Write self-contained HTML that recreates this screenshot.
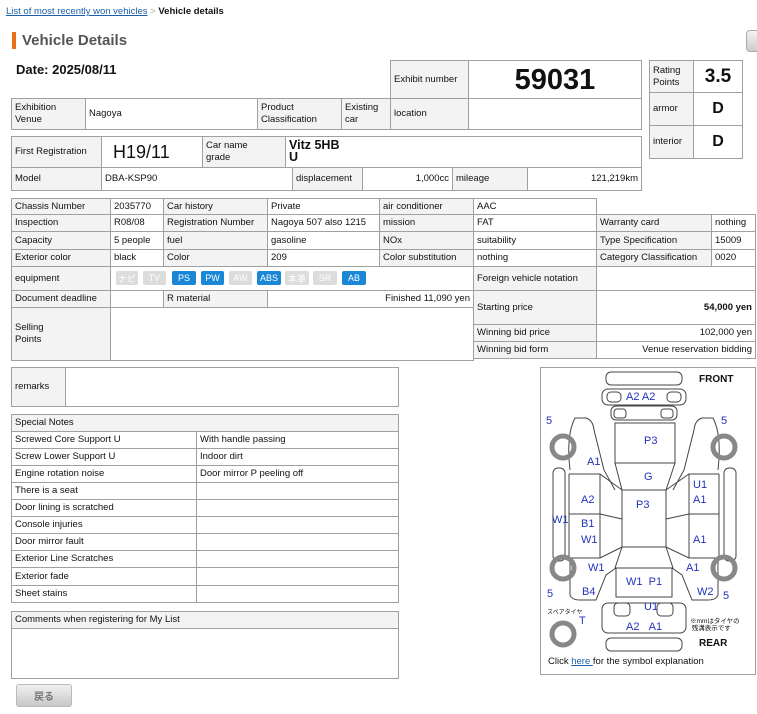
<!DOCTYPE html>
<html><head><meta charset="utf-8"><style>
*{margin:0;padding:0;box-sizing:border-box}
body{width:757px;height:714px;background:#fff;font-family:"Liberation Sans","Noto Sans CJK JP",sans-serif;font-size:9.5px;color:#111;position:relative;overflow:hidden}
.c{position:absolute;border:1px solid #a0a0a0;display:flex;align-items:center;padding:0 3px;line-height:12px;background:#fff}
.l{background:#f3f3f3}
.r{justify-content:flex-end}
.ctr{justify-content:center}
.t{position:absolute;white-space:nowrap}
.b{position:absolute;top:271px;height:14px;border-radius:2px;color:#fff;font-size:9px;display:flex;align-items:center;justify-content:center}
.g{background:#dcdcdc}.bl{background:#1a86d6}
.d{position:absolute;color:#2233bb;font-size:11px;white-space:nowrap}
</style></head><body>
<div class="t" style="left:6px;top:6px;font-size:9.5px"><span style="color:#1a5fa8;text-decoration:underline">List of most recently won vehicles</span> <span style="color:#aaa">&gt;</span> <b>Vehicle details</b></div>
<div style="position:absolute;left:12px;top:32px;width:4px;height:17px;background:#e8701a"></div>
<div class="t" style="left:22px;top:32px;font-size:15px;font-weight:bold;color:#555">Vehicle Details</div>
<div class="t" style="left:16px;top:62px;font-size:13px;font-weight:bold">Date: 2025/08/11</div>
<div style="position:absolute;left:746px;top:30px;width:20px;height:22px;border:1px solid #aaa;border-radius:4px;background:linear-gradient(#f4f4f4,#ccc)"></div>

<!-- exhibit -->
<div class="c l" style="left:390px;top:60px;width:79px;height:39px">Exhibit number</div>
<div class="c ctr" style="left:468px;top:60px;width:174px;height:39px;font-size:29px;font-weight:bold">59031</div>
<div class="c l" style="left:390px;top:98px;width:79px;height:32px">location</div>
<div class="c" style="left:468px;top:98px;width:174px;height:32px"></div>
<div class="c l" style="left:11px;top:98px;width:75px;height:32px">Exhibition<br>Venue</div>
<div class="c" style="left:85px;top:98px;width:173px;height:32px">Nagoya</div>
<div class="c l" style="left:257px;top:98px;width:85px;height:32px">Product<br>Classification</div>
<div class="c l" style="left:341px;top:98px;width:50px;height:32px">Existing<br>car</div>

<!-- rating -->
<div class="c l" style="left:649px;top:60px;width:45px;height:33px">Rating<br>Points</div>
<div class="c ctr" style="left:693px;top:60px;width:50px;height:33px;font-size:19px;font-weight:bold">3.5</div>
<div class="c l" style="left:649px;top:92px;width:45px;height:34px">armor</div>
<div class="c ctr" style="left:693px;top:92px;width:50px;height:34px;font-size:16px;font-weight:bold">D</div>
<div class="c l" style="left:649px;top:125px;width:45px;height:34px">interior</div>
<div class="c ctr" style="left:693px;top:125px;width:50px;height:34px;font-size:16px;font-weight:bold">D</div>

<!-- table B -->
<div class="c l" style="left:11px;top:136px;width:91px;height:32px">First Registration</div>
<div class="c" style="left:101px;top:136px;width:102px;height:32px;font-size:18px;padding-left:11px">H19/11</div>
<div class="c l" style="left:202px;top:136px;width:84px;height:32px">Car name<br>grade</div>
<div class="c" style="left:285px;top:136px;width:357px;height:32px;font-size:12.5px;font-weight:bold;line-height:12px;align-items:flex-start;padding-top:2px">Vitz 5HB<br>U</div>
<div class="c l" style="left:11px;top:167px;width:91px;height:24px">Model</div>
<div class="c" style="left:101px;top:167px;width:192px;height:24px">DBA-KSP90</div>
<div class="c l" style="left:292px;top:167px;width:71px;height:24px">displacement</div>
<div class="c r" style="left:362px;top:167px;width:91px;height:24px">1,000cc</div>
<div class="c l" style="left:452px;top:167px;width:76px;height:24px">mileage</div>
<div class="c r" style="left:527px;top:167px;width:115px;height:24px">121,219km</div>

<!-- table C -->
<div class="c l" style="left:11px;top:198px;width:100px;height:17px">Chassis Number</div>
<div class="c" style="left:110px;top:198px;width:54px;height:17px">2035770</div>
<div class="c l" style="left:163px;top:198px;width:105px;height:17px">Car history</div>
<div class="c" style="left:267px;top:198px;width:113px;height:17px">Private</div>
<div class="c l" style="left:379px;top:198px;width:95px;height:17px">air conditioner</div>
<div class="c" style="left:473px;top:198px;width:124px;height:17px">AAC</div>

<div class="c l" style="left:11px;top:214px;width:100px;height:18px">Inspection</div>
<div class="c" style="left:110px;top:214px;width:54px;height:18px">R08/08</div>
<div class="c l" style="left:163px;top:214px;width:105px;height:18px">Registration Number</div>
<div class="c" style="left:267px;top:214px;width:113px;height:18px">Nagoya 507 also 1215</div>
<div class="c l" style="left:379px;top:214px;width:95px;height:18px">mission</div>
<div class="c" style="left:473px;top:214px;width:124px;height:18px">FAT</div>
<div class="c l" style="left:596px;top:214px;width:116px;height:18px">Warranty card</div>
<div class="c" style="left:711px;top:214px;width:45px;height:18px">nothing</div>

<div class="c l" style="left:11px;top:231px;width:100px;height:19px">Capacity</div>
<div class="c" style="left:110px;top:231px;width:54px;height:19px">5 people</div>
<div class="c l" style="left:163px;top:231px;width:105px;height:19px">fuel</div>
<div class="c" style="left:267px;top:231px;width:113px;height:19px">gasoline</div>
<div class="c l" style="left:379px;top:231px;width:95px;height:19px">NOx</div>
<div class="c" style="left:473px;top:231px;width:124px;height:19px">suitability</div>
<div class="c l" style="left:596px;top:231px;width:116px;height:19px">Type Specification</div>
<div class="c" style="left:711px;top:231px;width:45px;height:19px">15009</div>

<div class="c l" style="left:11px;top:249px;width:100px;height:18px">Exterior color</div>
<div class="c" style="left:110px;top:249px;width:54px;height:18px">black</div>
<div class="c l" style="left:163px;top:249px;width:105px;height:18px">Color</div>
<div class="c" style="left:267px;top:249px;width:113px;height:18px">209</div>
<div class="c l" style="left:379px;top:249px;width:95px;height:18px">Color substitution</div>
<div class="c" style="left:473px;top:249px;width:124px;height:18px">nothing</div>
<div class="c l" style="left:596px;top:249px;width:116px;height:18px">Category Classification</div>
<div class="c" style="left:711px;top:249px;width:45px;height:18px">0020</div>

<div class="c l" style="left:11px;top:266px;width:100px;height:25px">equipment</div>
<div class="c" style="left:110px;top:266px;width:364px;height:25px"></div>
<div class="c l" style="left:473px;top:266px;width:124px;height:25px">Foreign vehicle notation</div>
<div class="c" style="left:596px;top:266px;width:160px;height:25px"></div>
<div class="b g" style="left:116px;width:22px">ナビ</div>
<div class="b g" style="left:143px;width:23px">TV</div>
<div class="b bl" style="left:172px;width:24px">PS</div>
<div class="b bl" style="left:201px;width:23px">PW</div>
<div class="b g" style="left:229px;width:23px">AW</div>
<div class="b bl" style="left:257px;width:24px">ABS</div>
<div class="b g" style="left:285px;width:24px">本革</div>
<div class="b g" style="left:313px;width:24px">SR</div>
<div class="b bl" style="left:342px;width:24px">AB</div>

<div class="c l" style="left:11px;top:290px;width:100px;height:18px">Document deadline</div>
<div class="c" style="left:110px;top:290px;width:54px;height:18px"></div>
<div class="c l" style="left:163px;top:290px;width:105px;height:18px">R material</div>
<div class="c r" style="left:267px;top:290px;width:207px;height:18px">Finished 11,090 yen</div>
<div class="c l" style="left:11px;top:307px;width:100px;height:54px">Selling<br>Points</div>
<div class="c" style="left:110px;top:307px;width:364px;height:54px"></div>
<div class="c l" style="left:473px;top:290px;width:124px;height:35px">Starting price</div>
<div class="c r" style="left:596px;top:290px;width:160px;height:35px;font-weight:bold">54,000 yen</div>
<div class="c l" style="left:473px;top:324px;width:124px;height:18px">Winning bid price</div>
<div class="c r" style="left:596px;top:324px;width:160px;height:18px">102,000 yen</div>
<div class="c l" style="left:473px;top:341px;width:124px;height:18px">Winning bid form</div>
<div class="c r" style="left:596px;top:341px;width:160px;height:18px">Venue reservation bidding</div>

<!-- remarks -->
<div class="c l" style="left:11px;top:367px;width:55px;height:40px">remarks</div>
<div class="c" style="left:65px;top:367px;width:334px;height:40px"></div>

<!-- special notes -->
<div class="c l" style="left:11px;top:414px;width:388px;height:18px">Special Notes</div>
<div class="c" style="left:11px;top:431px;width:186px;height:18px">Screwed Core Support U</div><div class="c" style="left:196px;top:431px;width:203px;height:18px">With handle passing</div>
<div class="c" style="left:11px;top:448px;width:186px;height:18px">Screw Lower Support U</div><div class="c" style="left:196px;top:448px;width:203px;height:18px">Indoor dirt</div>
<div class="c" style="left:11px;top:465px;width:186px;height:18px">Engine rotation noise</div><div class="c" style="left:196px;top:465px;width:203px;height:18px">Door mirror P peeling off</div>
<div class="c" style="left:11px;top:482px;width:186px;height:18px">There is a seat</div><div class="c" style="left:196px;top:482px;width:203px;height:18px"></div>
<div class="c" style="left:11px;top:499px;width:186px;height:18px">Door lining is scratched</div><div class="c" style="left:196px;top:499px;width:203px;height:18px"></div>
<div class="c" style="left:11px;top:516px;width:186px;height:18px">Console injuries</div><div class="c" style="left:196px;top:516px;width:203px;height:18px"></div>
<div class="c" style="left:11px;top:533px;width:186px;height:18px">Door mirror fault</div><div class="c" style="left:196px;top:533px;width:203px;height:18px"></div>
<div class="c" style="left:11px;top:550px;width:186px;height:18px">Exterior Line Scratches</div><div class="c" style="left:196px;top:550px;width:203px;height:18px"></div>
<div class="c" style="left:11px;top:567px;width:186px;height:19px">Exterior fade</div><div class="c" style="left:196px;top:567px;width:203px;height:19px"></div>
<div class="c" style="left:11px;top:585px;width:186px;height:18px">Sheet stains</div><div class="c" style="left:196px;top:585px;width:203px;height:18px"></div>

<div class="c l" style="left:11px;top:611px;width:388px;height:18px">Comments when registering for My List</div>
<div class="c" style="left:11px;top:628px;width:388px;height:51px"></div>
<div style="position:absolute;left:16px;top:684px;width:56px;height:23px;border:1px solid #bbb;border-radius:3px;background:linear-gradient(#f0f0f0,#c8c8c8);color:#777;font-size:10px;font-weight:bold;display:flex;align-items:center;justify-content:center">戻る</div>

<!-- diagram -->
<div style="position:absolute;left:540px;top:367px;width:216px;height:308px;border:1px solid #a0a0a0"></div>
<svg style="position:absolute;left:0;top:0" width="757" height="714" fill="none" stroke="#444" stroke-width="1">
<rect x="606" y="372" width="76" height="13" rx="5"/>
<rect x="602" y="389" width="84" height="16" rx="6"/>
<rect x="607" y="392" width="14" height="10" rx="4"/><rect x="667" y="392" width="14" height="10" rx="4"/>
<rect x="611" y="406" width="66" height="14" rx="5"/>
<rect x="614" y="409" width="12" height="9" rx="3"/><rect x="661" y="409" width="12" height="9" rx="3"/>
<path d="M615 423 H675 V463 H615 Z M615 463 L622 490 H666 L675 463 M622 490 V547 H666 V490 M622 547 L615 568 H673 L666 547 M616 568 V597 H672 V568"/>
<rect x="602" y="603" width="84" height="30" rx="6"/>
<rect x="614" y="603" width="16" height="13" rx="4"/><rect x="657" y="603" width="16" height="13" rx="4"/>
<rect x="606" y="638" width="76" height="13" rx="5"/>
<path d="M569 474 H600 L622 490 M569 514 H600 M569 558 H600 L622 547 M569 474 V558 M600 474 V558 M600 514 L622 519"/>
<path d="M719 474 H689 L666 490 M719 514 H689 M719 558 H689 L666 547 M719 474 V558 M689 474 V558 M689 514 L666 519"/>
<rect x="553" y="468" width="12" height="93" rx="5"/><rect x="724" y="468" width="12" height="93" rx="5"/>
<path d="M570 470 Q566 435 575 418 H586 Q593 420 594 430 L604 470 L615 490 M718 470 Q722 435 713 418 H702 Q695 420 694 430 L684 470 L673 490"/>
<path d="M570 560 V595 Q572 600 580 600 H596 L606 575 L616 568 M718 560 V595 Q716 600 708 600 H692 L682 575 L672 568"/>
<g stroke="#888" stroke-width="5"><circle cx="563" cy="447" r="11"/><circle cx="724" cy="447" r="11"/><circle cx="563" cy="568" r="11"/><circle cx="724" cy="568" r="11"/><circle cx="563" cy="634" r="11"/></g>
</svg>
<div class="t" style="left:699px;top:374px;font-size:10px;font-weight:bold">FRONT</div>
<div class="t" style="left:699px;top:638px;font-size:10px;font-weight:bold">REAR</div>
<div class="d" style="left:626px;top:391px">A2 A2</div>
<div class="d" style="left:546px;top:415px">5</div><div class="d" style="left:721px;top:415px">5</div>
<div class="d" style="left:644px;top:435px">P3</div>
<div class="d" style="left:587px;top:456px">A1</div>
<div class="d" style="left:644px;top:471px">G</div>
<div class="d" style="left:693px;top:479px">U1</div>
<div class="d" style="left:693px;top:494px">A1</div>
<div class="d" style="left:581px;top:494px">A2</div>
<div class="d" style="left:636px;top:499px">P3</div>
<div class="d" style="left:552px;top:514px">W1</div>
<div class="d" style="left:581px;top:518px">B1</div>
<div class="d" style="left:581px;top:534px">W1</div>
<div class="d" style="left:693px;top:534px">A1</div>
<div class="d" style="left:588px;top:562px">W1</div>
<div class="d" style="left:686px;top:562px">A1</div>
<div class="d" style="left:626px;top:576px">W1 &nbsp;P1</div>
<div class="d" style="left:547px;top:588px">5</div>
<div class="d" style="left:582px;top:586px">B4</div>
<div class="d" style="left:697px;top:586px">W2</div>
<div class="d" style="left:723px;top:590px">5</div>
<div class="d" style="left:644px;top:601px">U1</div>
<div class="d" style="left:579px;top:615px">T</div>
<div class="d" style="left:626px;top:621px">A2 &nbsp;&nbsp;A1</div>
<div class="t" style="left:547px;top:607px;font-size:6px">スペアタイヤ</div>
<div class="t" style="left:690px;top:618px;font-size:6.5px;line-height:7px">※mmはタイヤの<br>&nbsp;残溝表示です</div>
<div class="t" style="left:548px;top:656px;font-size:9.5px">Click <span style="color:#1a5fa8;text-decoration:underline">here </span> for the symbol explanation</div>
</body></html>
